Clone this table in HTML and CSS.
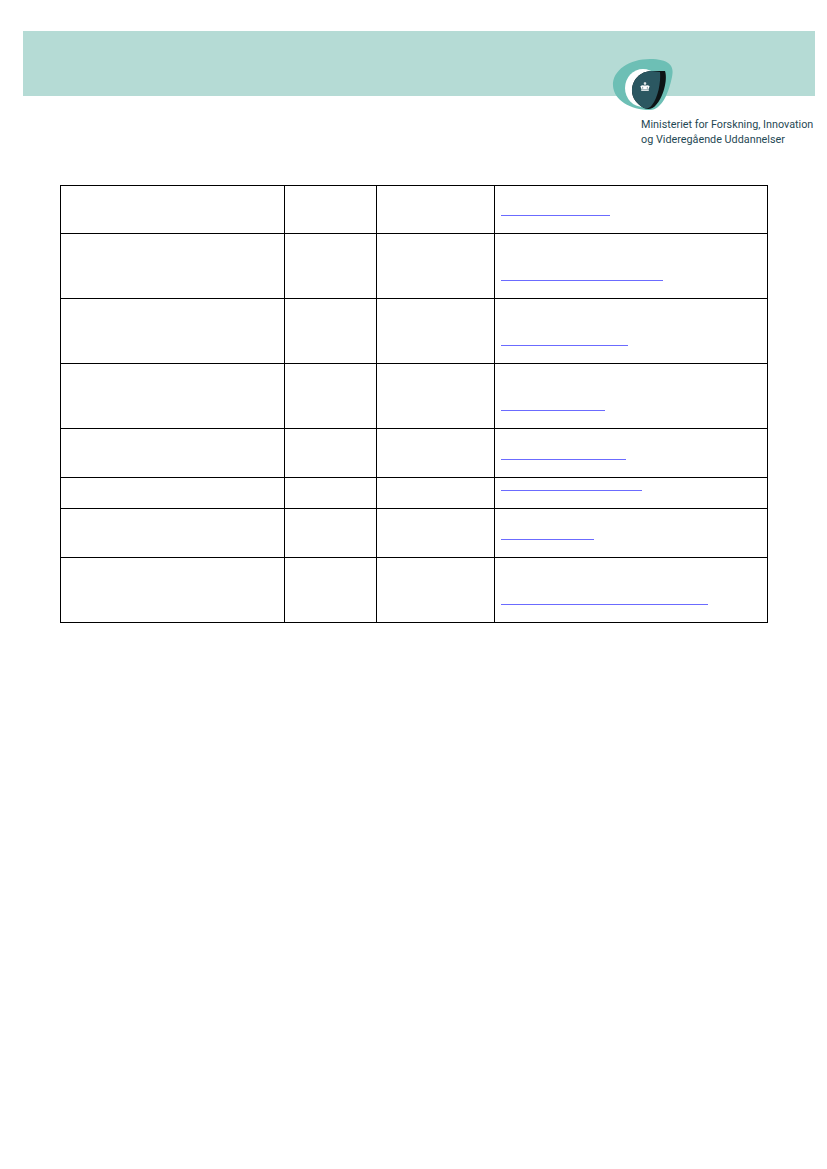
FILE: index.html
```html
<!DOCTYPE html>
<html lang="da">
<head>
<meta charset="utf-8">
<title>Ministeriet for Forskning, Innovation og Videregående Uddannelser</title>
<link rel="stylesheet" href="styles.css">
</head>
<body>
<header class="header">
  <div class="band"></div>
  <div class="brand">
    <svg class="logo" width="75" height="60" viewBox="605 55 75 60" aria-hidden="true">
      <path d="M613 86 C612 70 630 59 650 59 C668 59 675 65 672 77 C669 92 662 110 650 110 C630 110 614 100 613 86 Z" fill="#6dbfb5"/>
      <ellipse cx="643" cy="88" rx="18" ry="19" fill="#ffffff"/>
      <path d="M632 91 C632 80 640 71 652 71 L665 71 C668 80 663 98 656 105 C653 109 648 110 644 108 C637 104 632 98 632 91 Z" fill="#0d1315"/>
      <path d="M632 91 C632 80 640 71 652 71 L660 72 C661 82 658 98 652 105 C650 108 647 109 644 108 C637 104 632 98 632 91 Z" fill="#2b5761"/>
      <g fill="#ffffff">
        <rect x="644.5" y="82" width="1" height="2.6"/>
        <rect x="643.7" y="82.8" width="2.6" height="0.9"/>
        <circle cx="645" cy="85" r="0.8"/>
        <path d="M640.4 86.3 Q642.8 84.4 645 86.3 Q647.2 84.4 649.6 86.3 L648.6 89 L641.4 89 Z"/>
        <rect x="641.2" y="89.4" width="7.6" height="1.4"/>
      </g>
      <g fill="#2b5761">
        <rect x="642.5" y="86.8" width="0.6" height="1.9"/>
        <rect x="646.9" y="86.8" width="0.6" height="1.9"/>
      </g>
    </svg>
    <div class="brand-name">Ministeriet for Forskning, Innovation<br>og Videregående Uddannelser</div>
  </div>
</header>
<main class="content">
  <table class="list">
    <tr class="r2"><td class="c1"></td><td class="c2"></td><td class="c3"></td><td class="c4"><a class="link" href="#" style="width:109px"></a></td></tr>
    <tr class="r3"><td></td><td></td><td></td><td class="c4"><a class="link" href="#" style="width:162px"></a></td></tr>
    <tr class="r3"><td></td><td></td><td></td><td class="c4"><a class="link" href="#" style="width:127px"></a></td></tr>
    <tr class="r3"><td></td><td></td><td></td><td class="c4"><a class="link" href="#" style="width:104px"></a></td></tr>
    <tr class="r2"><td></td><td></td><td></td><td class="c4"><a class="link" href="#" style="width:125px"></a></td></tr>
    <tr class="r1"><td></td><td></td><td></td><td class="c4"><a class="link" href="#" style="width:141px"></a></td></tr>
    <tr class="r2"><td></td><td></td><td></td><td class="c4"><a class="link" href="#" style="width:93px"></a></td></tr>
    <tr class="r3"><td></td><td></td><td></td><td class="c4"><a class="link" href="#" style="width:207px"></a></td></tr>
  </table>
</main>
</body>
</html>
```
FILE: styles.css
```css
html, body {
  margin: 0;
  padding: 0;
  background: #ffffff;
  font-family: "Liberation Sans", Arial, sans-serif;
}
.header {
  position: relative;
  padding: 31px 12px 0 23px;
}
.band {
  height: 65px;
  background: #b5dbd5;
}
.brand {
  position: absolute;
  left: 605px;
  top: 55px;
}
.logo {
  display: block;
}
.brand-name {
  margin: 2px 0 0 36px;
  font-family: Roboto, "DejaVu Sans", sans-serif;
  font-size: 10.8px;
  line-height: 15px;
  color: #1f4954;
  font-weight: 400;
  white-space: nowrap;
}
.content {
  padding: 89px 0 0 60px;
}
.list {
  border-collapse: collapse;
  width: 708px;
  table-layout: fixed;
}
.list td {
  border: 1px solid #000;
  padding: 0 6px;
  vertical-align: bottom;
}
.c1 { width: 211px; }
.c2 { width: 79px; }
.c3 { width: 105px; }
.r1 { height: 31px; }
.r2 { height: 48px; }
.r3 { height: 65px; }
.r2:nth-child(5), .r2:nth-child(7) { height: 49px; }
.link {
  display: block;
  height: 0;
  border-bottom: 1px solid #6b6bff;
  margin-bottom: 17px;
}
```
